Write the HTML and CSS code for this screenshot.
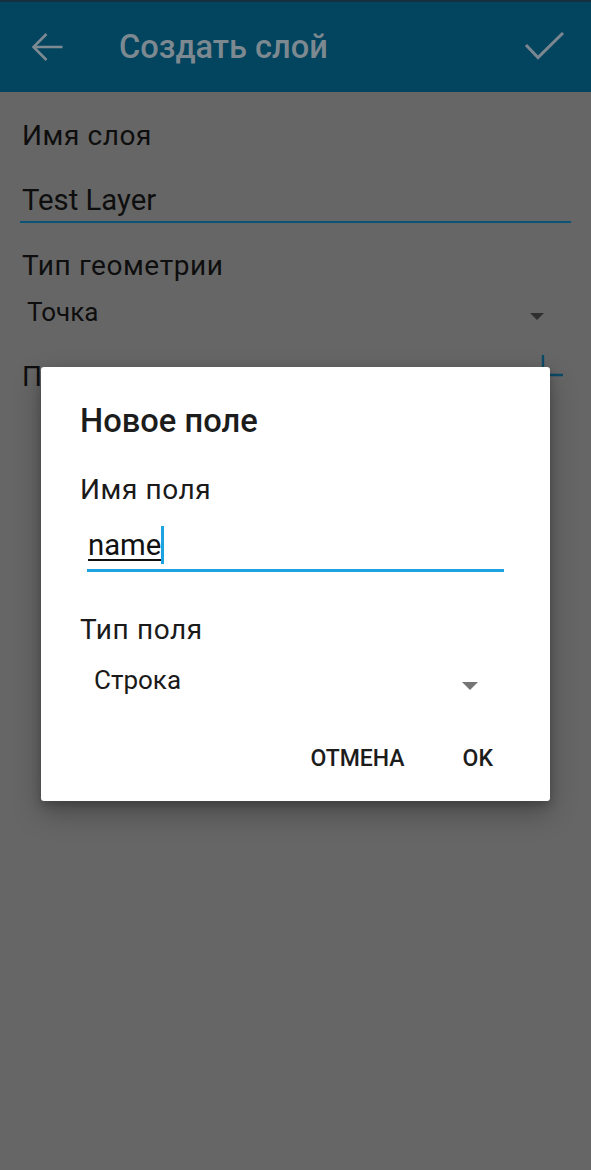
FILE: index.html
```html
<!DOCTYPE html>
<html lang="ru">
<head>
<meta charset="utf-8">
<link rel="stylesheet" href="styles.css">
</head>
<body>
<div class="screen">
  <header class="toolbar">
    <svg class="icon-back" width="40" height="40" viewBox="0 0 40 40">
      <path d="M35.5 20H7M19.5 7L6.5 20L19.5 33" fill="none" stroke="#7e8a92" stroke-width="2.6"/>
    </svg>
    <div class="title">Создать слой</div>
    <svg class="icon-check" width="44" height="34" viewBox="0 0 44 34">
      <path d="M2 13L14 25.5L39 1" fill="none" stroke="#7a8790" stroke-width="3"/>
    </svg>
  </header>
  <main class="content">
    <div class="label first">Имя слоя</div>
    <div class="input">Test Layer</div>
    <div class="label geom">Тип геометрии</div>
    <div class="select">
      <span class="select-text">Точка</span>
      <span class="tri tri-dark"></span>
    </div>
    <div class="fields-row">
      <span class="label">Поля</span>
      <svg class="icon-plus" width="40" height="40" viewBox="0 0 40 40">
        <path d="M20 0V40M0 20H40" stroke="#0b4a68" stroke-width="2.4"/>
      </svg>
    </div>
  </main>
  <div class="dialog">
    <div class="dlg-title">Новое поле</div>
    <div class="dlg-label name-label">Имя поля</div>
    <div class="dlg-input"><span class="composing">name</span><span class="cursor"></span></div>
    <div class="dlg-label type-label">Тип поля</div>
    <div class="dlg-select">
      <span class="dlg-select-text">Строка</span>
      <span class="tri tri-light"></span>
    </div>
    <div class="actions">
      <span class="btn">ОТМЕНА</span>
      <span class="btn">OK</span>
    </div>
  </div>
</div>
</body>
</html>
```
FILE: styles.css
```css
* { box-sizing: border-box; }
html, body {
  margin: 0;
  padding: 0;
  background: #666666;
}
body {
  font-family: Roboto, "Noto Sans", sans-serif;
  color: #0d0d0d;
}
.screen {
  position: relative;
  width: 591px;
  height: 1170px;
  overflow: hidden;
  background: #666666;
}
.toolbar {
  height: 92px;
  background: #03445f;
  border-top: 2px solid #15303e;
  display: flex;
  align-items: center;
  padding-left: 27px;
  padding-right: 23px;
}
.icon-back { flex: none; }
.title {
  margin-left: 52px;
  font-size: 32.6px;
  font-weight: 500;
  color: #7d8990;
  flex: 1;
}
.icon-check { flex: none; margin-top: 4px; }

.content {
  padding: 0 20px;
}
.label {
  font-size: 28px;
  line-height: 34px;
  letter-spacing: 0.6px;
  padding-left: 2px;
  color: #0e0e0e;
}
.label.first { margin-top: 27px; }
.input {
  margin-top: 28.5px;
  font-size: 29.3px;
  line-height: 36px;
  padding-left: 2px;
  padding-bottom: 3.5px;
  border-bottom: 2px solid #0a5576;
  color: #0e0e0e;
}
.label.geom { margin-top: 26px; }
.select {
  margin-top: 14px;
  display: flex;
  align-items: center;
  height: 30px;
  padding-left: 7px;
  padding-right: 27px;
}
.select-text {
  flex: 1;
  font-size: 26px;
  line-height: 30px;
  color: #0e0e0e;
}
.tri {
  flex: none;
  width: 0;
  height: 0;
  border-left: 7px solid transparent;
  border-right: 7px solid transparent;
  border-top: 7px solid #2f2f2f;
  margin-top: 9.4px;
}
.tri-light {
  border-top-color: #757575;
  border-left-width: 8px;
  border-right-width: 8px;
  border-top-width: 8px;
  margin-top: 11px;
}
.fields-row {
  margin-top: 33px;
  display: flex;
  justify-content: space-between;
  align-items: center;
  height: 34px;
}
.icon-plus { margin-right: 8px; margin-top: -4px; flex: none; }

.dialog {
  position: absolute;
  left: 41px;
  top: 367px;
  width: 509px;
  height: 434px;
  background: #ffffff;
  border-radius: 3px;
  box-shadow: 0 12px 28px rgba(0, 0, 0, 0.28), 0 4px 10px rgba(0, 0, 0, 0.2);
  padding: 35px 46px 0 39px;
  color: #1a1a1a;
}
.dlg-title {
  font-size: 32.7px;
  font-weight: 500;
  line-height: 38px;
  color: #1c1c1c;
}
.dlg-label {
  font-size: 28px;
  line-height: 34px;
  letter-spacing: 0.6px;
  color: #1a1a1a;
}
.name-label { margin-top: 33px; }
.dlg-input {
  margin-top: 19px;
  margin-left: 7px;
  font-size: 29.3px;
  line-height: 36px;
  padding-left: 1px;
  padding-bottom: 5px;
  border-bottom: 3px solid #1ea3e1;
  display: flex;
  align-items: center;
}
.composing {
  text-decoration: underline;
  text-decoration-thickness: 2px;
  text-underline-offset: 4px;
  color: #111;
}
.cursor {
  flex: none;
  display: inline-block;
  width: 3px;
  height: 38px;
  background: #1ea3e1;
}
.type-label { margin-top: 41px; }
.dlg-select {
  margin-top: 18px;
  display: flex;
  align-items: center;
  height: 30px;
  padding-left: 14px;
  padding-right: 26px;
}
.dlg-select-text {
  flex: 1;
  font-size: 26px;
  line-height: 30px;
  color: #1a1a1a;
}
.actions {
  margin-top: 51px;
  display: flex;
  justify-content: flex-end;
  gap: 58px;
  padding-right: 11px;
}
.btn {
  font-size: 23px;
  font-weight: 500;
  line-height: 26px;
  color: #1c1c1c;
}
```
